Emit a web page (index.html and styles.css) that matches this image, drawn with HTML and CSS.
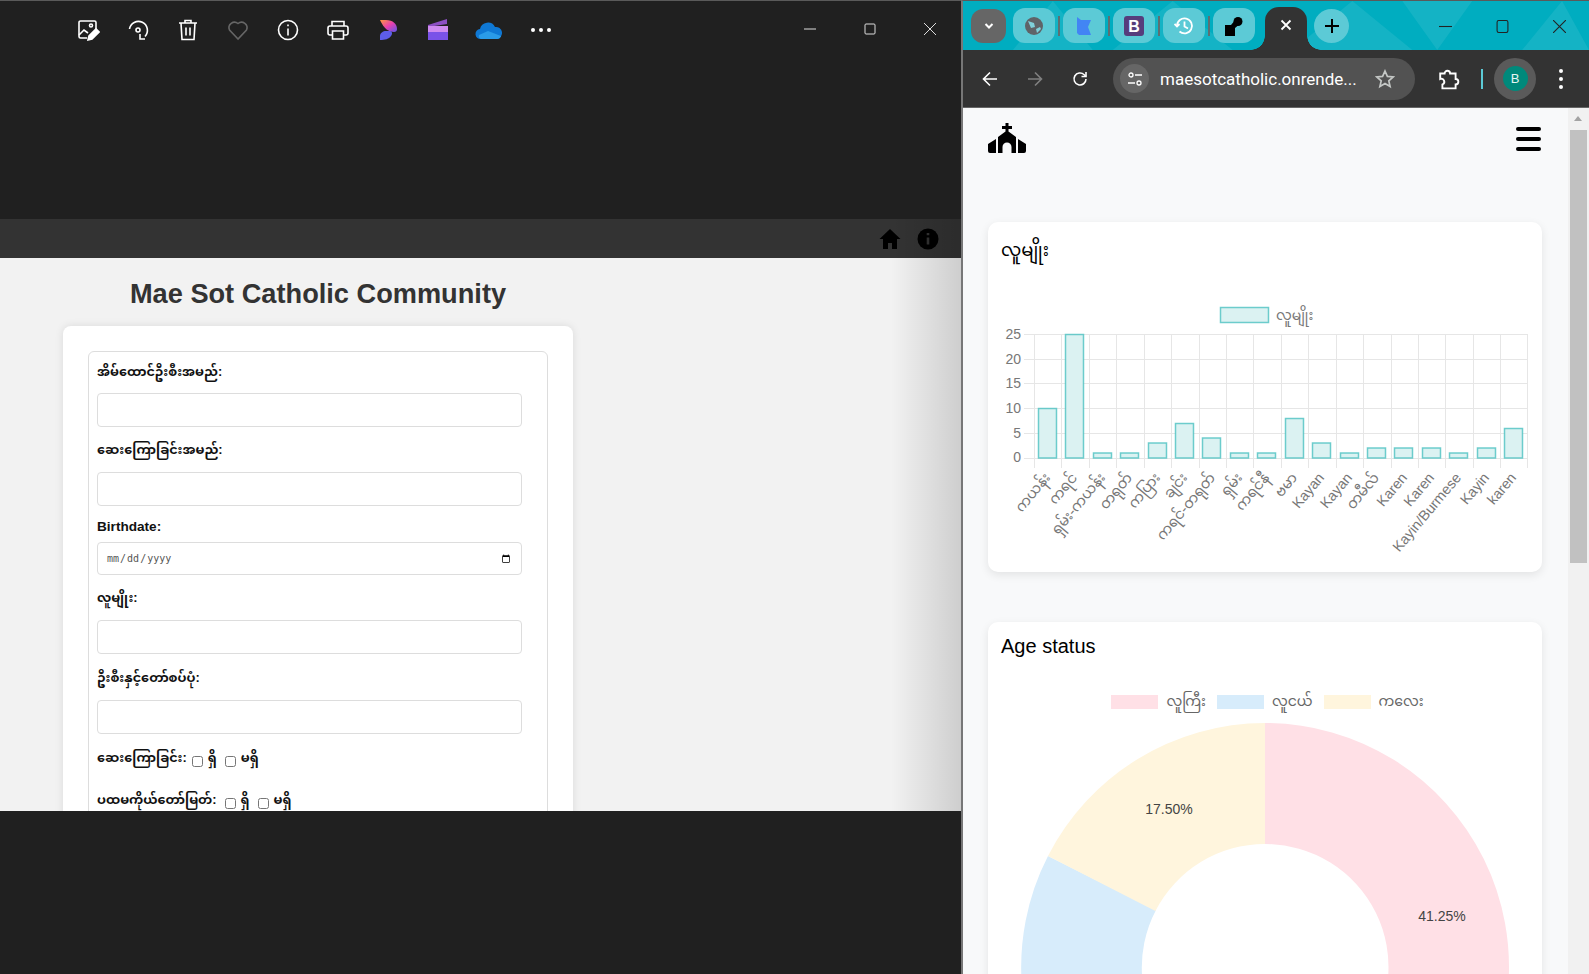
FILE: index.html
```html
<!DOCTYPE html>
<html lang="my">
<head>
    <meta charset="UTF-8">
    <title>Mae Sot Catholic Community</title>
    <link rel="stylesheet" href="styles.css">
</head>
<body>
<div class="desktop">

    <!-- photo viewer window -->
    <section class="viewer">
        <div class="viewer-bar">
            <div class="viewer-tools">
                <svg class="tool" viewBox="0 0 24 24" fill="none" stroke="#fff" stroke-width="1.6"><path d="M11 20H4.500A1.500 1.500 0 0 1 3 18.500V4.500A1.500 1.500 0 0 1 4.500 3h14A1.500 1.500 0 0 1 20 4.500V11"/><circle cx="15" cy="7.500" r="1.500"/><path d="M3 17l5-5 4 3"/><path d="M12 22l1-4 7-7 3 3-7 7z" fill="#fff"/></svg>
                <svg class="tool" viewBox="0 0 24 24" fill="none" stroke="#fff" stroke-width="1.6"><path d="M3.500 11A9 9 0 1 1 19 18.500"/><circle cx="12" cy="12" r="2"/><path d="M14 16v5h5"/></svg>
                <svg class="tool" viewBox="0 0 24 24" fill="none" stroke="#fff" stroke-width="1.6"><path d="M3 5h18M9 5V2.500h6V5M5 5l1 16.500h12L19 5M10 9.500v8M14 9.500v8"/></svg>
                <svg class="tool" viewBox="0 0 24 24" fill="none" stroke="#666" stroke-width="1.6"><path d="M12 21L3.500 12A5.500 5.500 0 0 1 12 5.500 5.500 5.500 0 0 1 20.500 12z"/></svg>
                <svg class="tool" viewBox="0 0 24 24" fill="none" stroke="#fff" stroke-width="1.6"><circle cx="12" cy="12" r="9.500"/><path d="M12 10.500v7M12 6.500v1.800"/></svg>
                <svg class="tool" viewBox="0 0 24 24" fill="none" stroke="#fff" stroke-width="1.6"><path d="M6 8V3.500h12V8M6 17H4a2 2 0 0 1-2-2v-5a2 2 0 0 1 2-2h16a2 2 0 0 1 2 2v5a2 2 0 0 1-2 2h-2"/><path d="M6.500 13h11v8h-11z"/></svg>
                <svg class="tool" viewBox="0 0 24 24"><defs><linearGradient id="cp" x1="0" y1="0" x2="1" y2="1"><stop offset="0" stop-color="#ff9a3d"/><stop offset=".5" stop-color="#e83fb0"/><stop offset="1" stop-color="#5a58e8"/></linearGradient></defs><path d="M4 2h6c7 0 11 4 11 9 0 2-1 3-3 3-5 0-10-3-14-12z" fill="url(#cp)"/><path d="M4 22v-4c0-3 3-5 6-5h3c3 0 4 2 2 5-2 3-6 4-11 4z" fill="#5d5de8"/></svg>
                <svg class="tool" viewBox="0 0 24 24"><path d="M2 7L21 1v5L2 9z" fill="#8d4fc4"/><path d="M2 8h20v6H2z" fill="#cf8af0"/><path d="M2 14h20v8H2z" fill="#7a52e8"/></svg>
                <svg class="tool tool-wide" viewBox="0 0 28 20"><path d="M6 19a5 5 0 0 1-1-10 8 8 0 0 1 15-2 6 6 0 0 1 2 12z" fill="#0f78d4"/><path d="M6 19a3 3 0 0 1-2-4l9-4 13 5a4 4 0 0 1-4 3z" fill="#2a9be8"/></svg>
                <div class="more-dots"><i></i><i></i><i></i></div>
            </div>
            <div class="viewer-controls">
                <svg viewBox="0 0 12 12" stroke="#ddd" fill="none"><path d="M0 6h12"/></svg>
                <svg viewBox="0 0 12 12" stroke="#ddd" fill="none"><rect x="1" y="1" width="10" height="10" rx="1"/></svg>
                <svg viewBox="0 0 12 12" stroke="#ddd" fill="none"><path d="M0 0l12 12M12 0L0 12"/></svg>
            </div>
        </div>

        <div class="photo">
            <header class="site-header">
                <svg class="site-icon" viewBox="0 0 24 24"><path d="M12 2L1.500 12H5v10h5v-6h4v6h5V12h3.500z" fill="#000"/></svg>
                <svg class="site-icon" viewBox="0 0 24 24"><circle cx="12" cy="12" r="10.500" fill="#000"/><path d="M12 10.500v7M12 6v2.200" stroke="#333" stroke-width="2.600"/></svg>
            </header>
            <div class="site-main">
                <h1 class="site-title">Mae Sot Catholic Community</h1>
                <div class="form-card">
                    <form class="form-box">
                        <div class="field first">
                            <label class="field-label">အိမ်ထောင်ဦးစီးအမည်:</label>
                            <input class="text-input" type="text">
                        </div>
                        <div class="field">
                            <label class="field-label">ဆေးကြောခြင်းအမည်:</label>
                            <input class="text-input" type="text">
                        </div>
                        <div class="field date">
                            <label class="field-label">Birthdate:</label>
                            <input class="text-input date-input" type="date">
                        </div>
                        <div class="field">
                            <label class="field-label">လူမျိုး:</label>
                            <input class="text-input" type="text">
                        </div>
                        <div class="field tall">
                            <label class="field-label">ဦးစီးနှင့်တော်စပ်ပုံ:</label>
                            <input class="text-input" type="text">
                        </div>
                        <div class="check-row short">
                            <span class="check-name">ဆေးကြောခြင်း:</span>
                            <input type="checkbox"><span>ရှိ</span>
                            <input type="checkbox"><span>မရှိ</span>
                        </div>
                        <div class="check-row">
                            <span class="check-name">ပထမကိုယ်တော်မြတ်:</span>
                            <input type="checkbox"><span>ရှိ</span>
                            <input type="checkbox"><span>မရှိ</span>
                        </div>
                    </form>
                </div>
            </div>
        </div>
    </section>

    <!-- browser window -->
    <section class="browser">
        <div class="tab-strip">
            <svg class="strip-art" viewBox="0 0 627 50" preserveAspectRatio="none"><path d="M90 0l40 50h-80zM210 0l60 50H150zM330 50L390 0l60 50zM440 0h70l-35 50zM560 50l40-50 27 50z" fill="#fff" opacity=".08"/></svg>
            <button class="tab-menu"><svg viewBox="0 0 12 12" fill="none" stroke="#fff" stroke-width="2"><path d="M2.500 4L6 7.500 9.500 4"/></svg></button>
            <div class="tab pinned"><svg viewBox="0 0 20 20"><circle cx="10" cy="10" r="9" fill="#5f6368"/><path d="M4 5l6 2 1 4-4 1zM12 13l4-2 1 2-4 4z" fill="#7fd0da"/></svg></div>
            <i class="tab-sep"></i>
            <div class="tab pinned"><svg viewBox="0 0 20 20"><path d="M3 1l4 3h10l-3 7 3 8H5L3 17z" fill="#4285f4"/></svg></div>
            <i class="tab-sep"></i>
            <div class="tab pinned"><svg viewBox="0 0 20 20"><rect width="20" height="20" rx="3" fill="#563d7c"/><text x="10" y="15.500" class="bs-letter">B</text></svg></div>
            <i class="tab-sep"></i>
            <div class="tab pinned"><svg viewBox="0 0 20 20" fill="none" stroke="#fff" stroke-width="1.800"><path d="M3 10a7.500 7.500 0 1 1 2.500 5.500"/><path d="M0.500 8L3 10.500 5.500 8"/><path d="M10.500 5.500V10.500l3.500 2"/></svg></div>
            <i class="tab-sep"></i>
            <div class="tab pinned"><svg viewBox="0 0 20 20"><path d="M1 9h6l5-6 5 4-6 5v8H1z" fill="#000"/><circle cx="14" cy="5.500" r="4.500" fill="#000"/></svg></div>
            <div class="tab active"><svg viewBox="0 0 12 12" stroke="#fff" stroke-width="1.800"><path d="M1.500 1.500l9 9M10.500 1.500l-9 9"/></svg></div>
            <button class="tab-new"><svg viewBox="0 0 14 14" stroke="#000" stroke-width="2"><path d="M7 0v14M0 7h14"/></svg></button>
            <div class="chrome-controls">
                <svg viewBox="0 0 12 12" stroke="#222" fill="none"><path d="M0 6h12"/></svg>
                <svg viewBox="0 0 12 12" stroke="#222" fill="none"><rect x="1" y="0.500" width="10" height="11" rx="1.500"/></svg>
                <svg viewBox="0 0 12 12" stroke="#222" fill="none"><path d="M0 0l12 12M12 0L0 12"/></svg>
            </div>
        </div>

        <div class="toolbar">
            <svg class="nav-icon" viewBox="0 0 16 16" fill="none" stroke="#fff" stroke-width="1.600"><path d="M15 8H2M8 1.500L1.500 8 8 14.500"/></svg>
            <svg class="nav-icon" viewBox="0 0 16 16" fill="none" stroke="#808080" stroke-width="1.600"><path d="M1 8h13M8 1.500L14.500 8 8 14.500"/></svg>
            <svg class="nav-icon" viewBox="0 0 16 16" fill="none" stroke="#fff" stroke-width="1.600"><path d="M14 8a6 6 0 1 1-1.800-4.300L14 5.500"/><path d="M14 1v4.500H9.500"/></svg>
            <div class="omnibox">
                <span class="tune"><svg viewBox="0 0 16 16" fill="none" stroke="#fff" stroke-width="1.300"><circle cx="4" cy="4" r="2"/><path d="M8 4h7M1 12h7"/><circle cx="12" cy="12" r="2"/></svg></span>
                <span class="url">maesotcatholic.onrende...</span>
                <svg class="star" viewBox="0 0 20 20" fill="none" stroke="#c4c7c5" stroke-width="1.700"><path d="M10 2l2.400 5.400 5.800.6-4.400 3.900 1.300 5.700-5.100-3-5.100 3 1.300-5.700L1.800 8l5.800-.6z"/></svg>
            </div>
            <svg class="ext-icon" viewBox="0 0 20 20" fill="none" stroke="#fff" stroke-width="1.700"><path d="M2 5h4a2.500 2.500 0 0 1 5 0h5v5a2.500 2.500 0 0 1 0 5v3.500H4V15a2.500 2.500 0 0 0-2-5z"/></svg>
            <i class="bar-sep"></i>
            <div class="avatar-pill"><span class="avatar">B</span></div>
            <div class="chrome-menu"><i></i><i></i><i></i></div>
        </div>

        <div class="page">
            <div class="page-main">
                <nav class="page-nav">
                    <svg class="church" viewBox="0 0 38 30"><path d="M17.500 0h3v3H24v3h-3.500v2.500L28 14v16h-4.500v-6a4.500 4.500 0 0 0-9 0v6H10V14l7.500-5.500V6H14V3h3.500z" fill="#000"/><path d="M8 16v14H2a2 2 0 0 1-2-2v-7zM30 16v14h6a2 2 0 0 0 2-2v-7z" fill="#000"/></svg>
                    <div class="burger"><i></i><i></i><i></i></div>
                </nav>

                <div class="chart-card bar-card">
                    <h2 class="chart-title mm">လူမျိုး</h2>
                    <svg class="chart-svg" width="553" height="300" viewBox="0 0 553 300">
                        <g class="grid">
                            <path d="M36 59.500H539M36 84.500H539M36 108.500H539M36 133.500H539M36 158.500H539M36 183.500H539"/>
                            <path d="M46.500 59V193M73.500 59V193M101.500 59V193M128.500 59V193M156.500 59V193M183.500 59V193M211.500 59V193M238.500 59V193M265.500 59V193M293.500 59V193M320.500 59V193M348.500 59V193M375.500 59V193M403.500 59V193M430.500 59V193M457.500 59V193M485.500 59V193M512.500 59V193M539.500 59V193"/>
                        </g>
                        <rect class="legend-swatch" x="232.500" y="32.500" width="48" height="15"/>
                        <text class="chart-text" x="288" y="45">လူမျိုး</text>
                        <g class="bars">
                            <rect x="50.500" y="133.500" width="18" height="49.500"/>
                            <rect x="77.500" y="59.500" width="18" height="123.500"/>
                            <rect x="105.500" y="178" width="18" height="5"/>
                            <rect x="132.500" y="178" width="18" height="5"/>
                            <rect x="160.500" y="168" width="18" height="15"/>
                            <rect x="187.500" y="148.500" width="18" height="34.500"/>
                            <rect x="214.500" y="163" width="18" height="20"/>
                            <rect x="242.500" y="178" width="18" height="5"/>
                            <rect x="269.500" y="178" width="18" height="5"/>
                            <rect x="297.500" y="143.500" width="18" height="39.500"/>
                            <rect x="324.500" y="168" width="18" height="15"/>
                            <rect x="352.500" y="178" width="18" height="5"/>
                            <rect x="379.500" y="173" width="18" height="10"/>
                            <rect x="406.500" y="173" width="18" height="10"/>
                            <rect x="434.500" y="173" width="18" height="10"/>
                            <rect x="461.500" y="178" width="18" height="5"/>
                            <rect x="489.500" y="173" width="18" height="10"/>
                            <rect x="516.500" y="153.500" width="18" height="29.500"/>
                        </g>
                        <g class="y-labels">
                            <text x="33" y="64">25</text>
                            <text x="33" y="89">20</text>
                            <text x="33" y="113">15</text>
                            <text x="33" y="138">10</text>
                            <text x="33" y="163">5</text>
                            <text x="33" y="187">0</text>
                        </g>
                        <g class="x-labels">
                            <text transform="translate(63 203) rotate(-50)">ကယန်း</text>
                            <text transform="translate(90 203) rotate(-50)">ကရင်</text>
                            <text transform="translate(118 203) rotate(-50)">ရှမ်း-ကယန်း</text>
                            <text transform="translate(145 203) rotate(-50)">တရုတ်</text>
                            <text transform="translate(173 203) rotate(-50)">ကပြား</text>
                            <text transform="translate(200 203) rotate(-50)">ချင်း</text>
                            <text transform="translate(228 203) rotate(-50)">ကရင်-တရုတ်</text>
                            <text transform="translate(255 203) rotate(-50)">ရှမ်း</text>
                            <text transform="translate(282 203) rotate(-50)">ကရင်နီ</text>
                            <text transform="translate(310 203) rotate(-50)">ဗမာ</text>
                            <text transform="translate(337 203) rotate(-50)">Kayan</text>
                            <text transform="translate(365 203) rotate(-50)">Kayan</text>
                            <text transform="translate(392 203) rotate(-50)">တမီလ်</text>
                            <text transform="translate(420 203) rotate(-50)">Karen</text>
                            <text transform="translate(447 203) rotate(-50)">Karen</text>
                            <text transform="translate(474 203) rotate(-50)">Kayin/Burmese</text>
                            <text transform="translate(502 203) rotate(-50)">Kayin</text>
                            <text transform="translate(529 203) rotate(-50)">karen</text>
                        </g>
                    </svg>
                </div>

                <div class="chart-card donut-card">
                    <h2 class="chart-title">Age status</h2>
                    <div class="donut-legend">
                        <span class="legend-item"><i class="swatch pink"></i>လူကြီး</span>
                        <span class="legend-item"><i class="swatch blue"></i>လူငယ်</span>
                        <span class="legend-item"><i class="swatch yellow"></i>ကလေး</span>
                    </div>
                    <svg class="donut" width="553" height="300" viewBox="0 0 553 300">
                        <path fill="#ffe0e6" d="M277 0A244 244 0 0 1 470.600 392.500L374.600 319.500A123 123 0 0 0 277 121z"/>
                        <path fill="#d7ecfb" d="M60 133L168 187A123 123 0 0 0 179.400 319.500L83.400 392.500A244 244 0 0 1 60 133z"/>
                        <path fill="#fff5dd" d="M277 0V121A123 123 0 0 0 167.400 188L60 133A244 244 0 0 1 277 0z"/>
                        <text class="slice-label" x="181" y="91">17.50%</text>
                        <text class="slice-label" x="454" y="198">41.25%</text>
                    </svg>
                </div>
            </div>
            <div class="scrollbar">
                <span class="scroll-up"></span>
                <span class="scroll-thumb"></span>
            </div>
        </div>
    </section>

</div>
</body>
</html>
```

FILE: styles.css
```css
* {
    box-sizing: border-box;
}
html, body {
    margin: 0;
    height: 974px;
    overflow: hidden;
    background: #202020;
    font-family: "Liberation Sans", "Noto Sans Myanmar", "Padauk", "Noto Sans", sans-serif;
}
.desktop {
    display: flex;
    width: 1589px;
    height: 974px;
}

/* photo viewer */
.viewer {
    width: 961px;
    flex: none;
    background: #202020;
    border-top: 1px solid #5a5a5a;
}
.viewer-bar {
    height: 218px;
    position: relative;
}
.viewer-tools {
    display: flex;
    align-items: center;
    height: 58px;
    padding-left: 76px;
}
.tool {
    width: 24px;
    height: 24px;
    margin-right: 26px;
    flex: none;
}
.tool-wide {
    width: 28px;
    height: 20px;
    margin-left: -1px;
    margin-right: 25px;
}
.more-dots {
    display: flex;
    gap: 4px;
    margin-left: 3px;
}
.more-dots i {
    width: 4px;
    height: 4px;
    border-radius: 50%;
    background: #fff;
}
.viewer-controls {
    position: absolute;
    top: 22px;
    right: 25px;
    display: flex;
    gap: 48px;
}
.viewer-controls svg {
    width: 12px;
    height: 12px;
}
.photo {
    position: relative;
    height: 592px;
    overflow: hidden;
    background: #f2f2f2;
}
.photo::after {
    content: "";
    position: absolute;
    top: 0;
    right: 0;
    bottom: 0;
    width: 70px;
    background: linear-gradient(to right, rgba(0, 0, 0, 0), rgba(0, 0, 0, .15));
}
.site-header {
    height: 39px;
    background: #333;
    display: flex;
    justify-content: flex-end;
    align-items: center;
    gap: 14px;
    padding-right: 21px;
}
.site-icon {
    width: 24px;
    height: 24px;
}
.site-main {
    width: 636px;
    padding-left: 63px;
}
.site-title {
    width: 510px;
    margin: 0;
    height: 68px;
    padding-top: 20px;
    font-size: 27.2px;
    line-height: 32px;
    font-weight: bold;
    color: #333;
    text-align: center;
}
.form-card {
    width: 510px;
    padding: 25px 25px 0;
    background: #fff;
    border-radius: 8px;
    box-shadow: 0 0 8px rgba(0, 0, 0, .1);
    height: 500px;
}
.form-box {
    width: 460px;
    height: 480px;
    border: 1px solid #ddd;
    border-radius: 6px;
    padding: 0 8px;
}
.field-label {
    display: flex;
    align-items: center;
    height: 45px;
    padding-top: 3px;
    font-size: 12.8px;
    font-weight: bold;
    color: #111;
}
.field.first .field-label {
    height: 41px;
    padding-top: 0;
}
.field.tall .field-label {
    height: 46px;
    padding-top: 4px;
}
.field.date .field-label {
    height: 36px;
    padding-top: 5px;
    font-size: 13.6px;
}
.text-input {
    display: block;
    width: 425px;
    height: 34px;
    border: 1px solid #ddd;
    border-radius: 4px;
    background: #fff;
    padding: 0 8px;
}
.date-input {
    height: 33px;
    font-size: 10px;
    color: #555;
}
.check-row {
    display: flex;
    align-items: center;
    height: 42px;
    position: relative;
    top: 4px;
    font-size: 12.8px;
    font-weight: bold;
    color: #111;
}
.check-row input {
    width: 11px;
    height: 11px;
    margin: 5px 5px 0 8px;
}
.check-row.short .check-name {
    margin-right: -3px;
}

/* browser */
.browser {
    width: 628px;
    flex: none;
    border-left: 2px solid #777;
    border-top: 1px solid #5a5a5a;
    overflow: hidden;
}
.tab-strip {
    position: relative;
    height: 49px;
    background: #00adc0;
    display: flex;
    align-items: center;
    padding-left: 8px;
}
.strip-art {
    position: absolute;
    left: 0;
    top: 0;
    width: 100%;
    height: 100%;
}
.tab-menu {
    position: relative;
    width: 35px;
    height: 34px;
    border: 0;
    padding: 0;
    border-radius: 12px;
    background: #666;
    margin-right: 7px;
    display: flex;
    align-items: center;
    justify-content: center;
}
.tab-menu svg {
    width: 12px;
    height: 12px;
}
.tab {
    position: relative;
    display: flex;
    align-items: center;
    justify-content: center;
}
.tab svg {
    width: 20px;
    height: 20px;
}
.tab.pinned {
    width: 42px;
    height: 35px;
    border-radius: 12px;
    background: #5ccad6;
}
.tab-sep {
    position: relative;
    width: 2px;
    height: 20px;
    margin: 0 3px;
    background: #5f6f72;
}
.tab.active {
    width: 42px;
    height: 43px;
    margin: 6px 7px 0 10px;
    padding-bottom: 8px;
    background: #333;
    border-radius: 14px 14px 0 0;
}
.tab.active::before, .tab.active::after {
    content: "";
    position: absolute;
    bottom: 0;
    width: 14px;
    height: 14px;
}
.tab.active::before {
    left: -14px;
    background: radial-gradient(circle at 0 0, transparent 13.5px, #333 14px);
}
.tab.active::after {
    right: -14px;
    background: radial-gradient(circle at 100% 0, transparent 13.5px, #333 14px);
}
.tab.active svg {
    width: 12px;
    height: 12px;
}
.tab-new {
    position: relative;
    width: 35px;
    height: 34px;
    border: 0;
    padding: 0;
    border-radius: 50%;
    background: #5ccad6;
    display: flex;
    align-items: center;
    justify-content: center;
}
.tab-new svg {
    width: 14px;
    height: 14px;
}
.chrome-controls {
    position: absolute;
    right: 23px;
    top: 19px;
    display: flex;
    gap: 44px;
}
.chrome-controls svg {
    width: 13px;
    height: 13px;
}
.toolbar {
    height: 58px;
    background: #333;
    border-bottom: 1px solid #666;
    display: flex;
    align-items: center;
    padding-left: 19px;
    color: #fff;
}
.nav-icon {
    width: 16px;
    height: 16px;
    margin-right: 29px;
    flex: none;
}
.omnibox {
    width: 302px;
    height: 42px;
    margin-left: -4px;
    border-radius: 21px;
    background: #525252;
    display: flex;
    align-items: center;
    padding-left: 7px;
}
.tune {
    width: 29px;
    height: 29px;
    border-radius: 50%;
    background: #666;
    display: flex;
    align-items: center;
    justify-content: center;
}
.tune svg {
    width: 16px;
    height: 16px;
}
.url {
    margin-left: 11px;
    width: 210px;
    font-family: "Roboto", "Liberation Sans", sans-serif;
    font-size: 17px;
    white-space: nowrap;
}
.star {
    width: 20px;
    height: 20px;
    margin-left: 5px;
}
.ext-icon {
    width: 22px;
    height: 22px;
    margin-left: 23px;
}
.bar-sep {
    width: 2px;
    height: 20px;
    margin: 0 11px 0 21px;
    background: #5ccad6;
}
.avatar-pill {
    width: 42px;
    height: 42px;
    border-radius: 21px;
    background: #5a5a5a;
    display: flex;
    align-items: center;
    justify-content: center;
}
.avatar {
    width: 25px;
    height: 25px;
    border-radius: 50%;
    background: #00897b;
    font-size: 13px;
    line-height: 25px;
    text-align: center;
    color: #e6f5f3;
}
.chrome-menu {
    margin-left: 23px;
    display: flex;
    flex-direction: column;
    gap: 4px;
}
.chrome-menu i {
    width: 4px;
    height: 4px;
    border-radius: 50%;
    background: #fff;
}

/* page inside the browser */
.page {
    height: 866px;
    background: #f8f9fa;
    display: flex;
}
.page-main {
    width: 605px;
    flex: none;
    padding: 0 26px 0 25px;
}
.page-nav {
    height: 114px;
    padding-top: 15px;
    display: flex;
    justify-content: space-between;
    align-items: flex-start;
}
.church {
    width: 38px;
    height: 30px;
}
.burger {
    margin-top: 4px;
    margin-right: 1px;
    width: 25px;
    display: flex;
    flex-direction: column;
    gap: 6px;
}
.burger i {
    height: 4px;
    border-radius: 2px;
    background: #000;
}
.chart-card {
    background: #fff;
    border-radius: 10px;
    box-shadow: 0 3px 10px rgba(0, 0, 0, .09);
}
.bar-card {
    height: 350px;
    margin-bottom: 50px;
    position: relative;
}
.chart-title {
    margin: 0;
    padding: 12px 0 0 13px;
    font-size: 20px;
    line-height: 24px;
    font-weight: normal;
    color: #000;
}
.chart-title.mm {
    font-size: 18px;
    padding-top: 16px;
}
.chart-svg {
    position: absolute;
    left: 0;
    top: 53px;
}
.grid path {
    stroke: #e6e6e6;
    stroke-width: 1;
    fill: none;
}
.legend-swatch {
    fill: #dbf2f2;
    stroke: #4bc0c0;
    stroke-width: 1.500;
    stroke-opacity: .8;
}
.chart-text, .y-labels {
    font-size: 14px;
    fill: #777;
}
.x-labels {
    font-size: 14.4px;
    fill: #777;
    text-anchor: end;
}
.y-labels {
    text-anchor: end;
}
.bars rect {
    fill: #dbf2f2;
    stroke: #4bc0c0;
    stroke-width: 1.500;
    stroke-opacity: .8;
}
.donut-card {
    height: 400px;
    overflow: hidden;
}
.donut-legend {
    display: flex;
    gap: 11px;
    justify-content: center;
    margin-top: 28px;
    height: 37px;
    padding-bottom: 5px;
    padding-left: 5px;
    align-items: center;
    font-size: 14px;
    color: #666;
}
.legend-item {
    display: flex;
    align-items: center;
    gap: 8px;
}
.swatch {
    width: 47px;
    height: 14px;
}
.pink {
    background: #ffe0e6;
}
.blue {
    background: #d7ecfb;
}
.yellow {
    background: #fff5dd;
}
.donut {
    display: block;
    overflow: visible;
}
.slice-label {
    font-size: 14px;
    fill: #444;
    text-anchor: middle;
}
.scrollbar {
    width: 21px;
    flex: none;
    background: #f1f1f1;
    padding-top: 22px;
    position: relative;
}
.scroll-up {
    position: absolute;
    top: 8px;
    left: 6px;
    width: 0;
    height: 0;
    border: 4.500px solid transparent;
    border-top: 0;
    border-bottom: 5px solid #a3a3a3;
}
.scroll-thumb {
    display: block;
    margin-left: 2px;
    width: 17px;
    height: 433px;
    background: #c1c1c1;
}
.bs-letter {
    font-size: 16px;
    font-weight: bold;
    fill: #fff;
    text-anchor: middle;
}
```
